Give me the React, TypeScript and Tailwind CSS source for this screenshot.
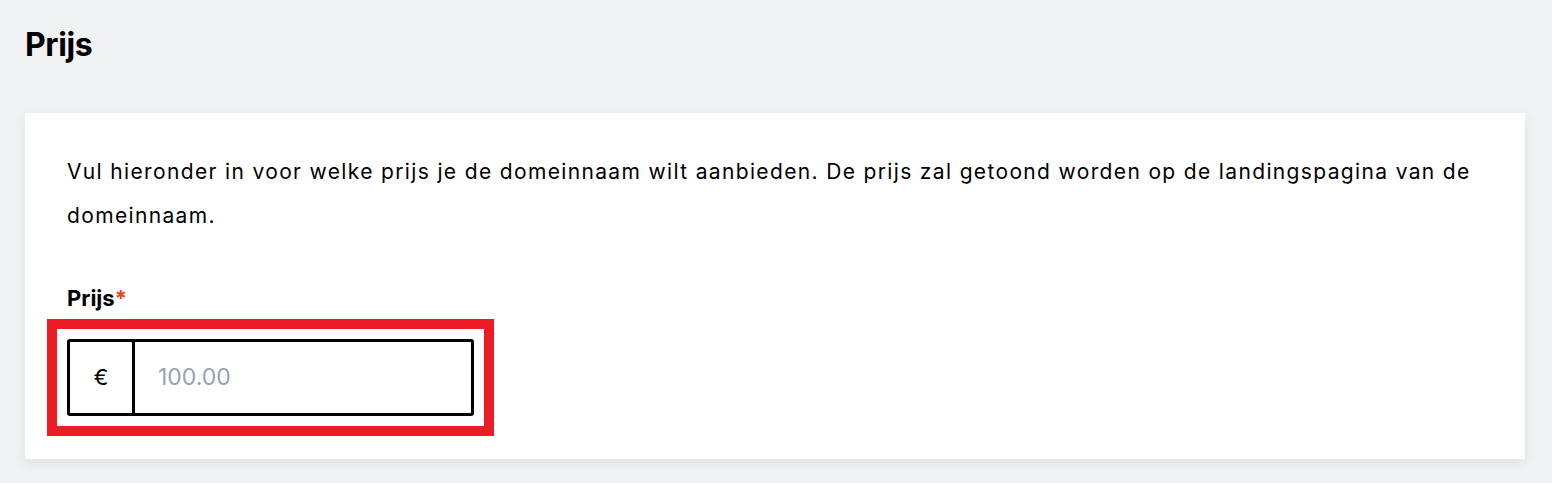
export default function App() {
  return (
    <div className="min-h-[483px] bg-[#f1f2f4] pl-[25px] pr-[27px] pt-[27px] pb-[25px] font-['Inter',sans-serif] text-black">
      <h1 className="text-[32px] leading-[36px] font-bold tracking-[-0.4px]">Prijs</h1>
      <div className="mt-[50px] bg-white shadow-[0_4px_12px_rgba(0,0,0,0.08)] px-[42px] pt-[37px] pb-[43px]">
        <p className="text-[21px] leading-[44px] tracking-[1.35px]">
          Vul hieronder in voor welke prijs je de domeinnaam wilt aanbieden. De prijs zal getoond worden op de landingspagina van de domeinnaam.
        </p>
        <label className="mt-[46px] block text-[22px] leading-[28px] font-bold">
          Prijs<span className="text-[#f5401a]">*</span>
        </label>
        <div className="mt-[27px] w-[407px] outline-[10px] outline-solid outline-[#ed1c24] outline-offset-[10px]">
          <div className="flex h-[77px] rounded-[3px] border-[3px] border-black">
            <div className="flex w-[65px] items-center justify-center border-r-[3px] border-black text-[22px]">€</div>
            <input
              className="min-w-0 flex-1 bg-transparent pl-[23px] text-[23px] outline-none placeholder:text-[#97a3ad]"
              placeholder="100.00"
            />
          </div>
        </div>
      </div>
    </div>
  );
}
